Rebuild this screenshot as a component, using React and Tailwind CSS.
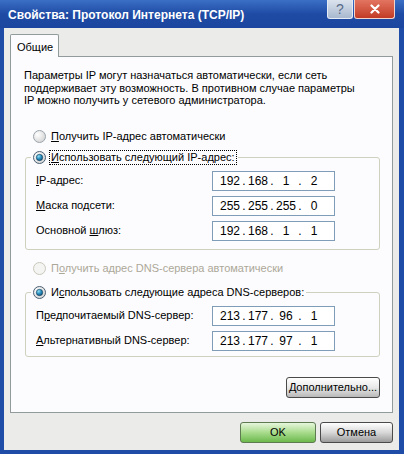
import React from "react";

const font = { fontFamily: '"Liberation Sans", Arial, sans-serif' };

const Radio = ({ checked, disabled }) => (
  <svg width="13" height="13" viewBox="0 0 13 13" className="shrink-0">
    <defs>
      <radialGradient id="rbg" cx="0.35" cy="0.35" r="0.8">
        <stop offset="0" stopColor="#ffffff" />
        <stop offset="1" stopColor="#cfcfcf" />
      </radialGradient>
      <radialGradient id="rdot" cx="0.35" cy="0.3" r="0.8">
        <stop offset="0" stopColor="#8fe0f5" />
        <stop offset="0.5" stopColor="#2a8fc0" />
        <stop offset="1" stopColor="#0b4a70" />
      </radialGradient>
    </defs>
    <circle
      cx="6.5"
      cy="6.5"
      r="6"
      fill={disabled ? "#f4f4f2" : "url(#rbg)"}
      stroke={disabled ? "#c9c7ba" : checked ? "#4a5f74" : "#9aa4ad"}
    />
    {checked && <circle cx="6.5" cy="6.5" r="3.2" fill="url(#rdot)" stroke="#123a55" strokeWidth="0.6" />}
  </svg>
);

const IpField = ({ parts }) => (
  <div className="w-[123px] h-[20px] border border-[#7f9db9] bg-white flex items-center pl-[5px] text-[12px]">
    {parts.map((p, i) => (
      <React.Fragment key={i}>
        {i > 0 && <span className="w-[4px] text-center">.</span>}
        <span className="w-[24px] text-center">{p}</span>
      </React.Fragment>
    ))}
  </div>
);

const Row = ({ label, parts }) => (
  <div className="flex items-center h-[20px]">
    <span className="w-[176px]">{label}</span>
    <IpField parts={parts} />
  </div>
);

const XpButton = ({ children, className = "" }) => (
  <button
    className={`h-[21px] rounded-[3px] border border-[#4a4a4a] flex items-center justify-center text-[11px] ${className}`}
  >
    {children}
  </button>
);

export default function App() {
  return (
    <div className="w-[404px] h-[454px] bg-[#1f4ca6] flex flex-col text-[11px] text-black" style={font}>
      {/* title bar */}
      <div className="h-[28px] flex justify-between bg-gradient-to-b from-[#3b6fc6] via-[#1f4ba5] to-[#1b46a0]">
        <span className="pl-[8px] pt-[8px] text-white font-bold text-[12px] leading-[14px]">
          Свойства: Протокол Интернета (TCP/IP)
        </span>
        <div className="flex gap-[1px] pr-[9px] h-[19px]">
          <div className="w-[26px] h-[19px] rounded-b-[3px] border border-t-0 border-[#e6ecf6] bg-gradient-to-b from-[#dbe3ee] to-[#a9b8cf] flex items-center justify-center text-[#5a6b88] text-[14px] leading-none">
            ?
          </div>
          <div className="w-[41px] h-[19px] rounded-b-[3px] border border-t-0 border-[#f2d4cc] bg-gradient-to-b from-[#e27460] to-[#c23a24] flex items-center justify-center">
            <svg width="10" height="10" viewBox="0 0 10 10">
              <path d="M1.5 1.5 L8.5 8.5 M8.5 1.5 L1.5 8.5" stroke="#ffffff" strokeWidth="2.2" strokeLinecap="round" />
            </svg>
          </div>
        </div>
      </div>

      {/* body */}
      <div className="flex-1 ml-[4px] mr-[5px] mb-[4px] bg-[#ebebea] flex flex-col px-[6px]">
        <div className="flex mt-[6px]">
          <div className="h-[23px] w-[49px] bg-[#fcfcfe] border border-b-0 border-[#919b9c] rounded-t-[2px] pl-[6px] pt-[4px] -mb-[1px] z-10">
            Общие
          </div>
        </div>
        <div className="h-[357px] border border-[#919b9c] bg-[#fcfcfe] flex flex-col pl-[13px] pr-[12px]">
          <p className="pt-[12px] leading-[12.5px]">
            Параметры IP могут назначаться автоматически, если сеть
            <br />
            поддерживает эту возможность. В противном случае параметры
            <br />
            IP можно получить у сетевого администратора.
          </p>

          <div className="flex items-center gap-[5px] h-[16px] mt-[22px] ml-[9px]">
            <Radio />
            <span>
              <u>П</u>олучить IP-адрес автоматически
            </span>
          </div>

          <fieldset className="mt-[5px] ml-[1px] w-[355px] border border-[#d0d0bf] rounded-[3px] px-[10px] pb-[8px]">
            <legend className="-ml-[5px] px-[2px] h-[16px]">
              <span className="flex items-center gap-[4px] h-[16px]">
                <Radio checked />
                <span className="outline-1 outline-dotted outline-black px-[1px] leading-[13px]">
                  <u>И</u>спользовать следующий IP-адрес:
                </span>
              </span>
            </legend>
            <div className="flex flex-col gap-[5px] pt-[5px]">
              <Row label={<><u>I</u>P-адрес:</>} parts={["192", "168", "1", "2"]} />
              <Row label={<><u>М</u>аска подсети:</>} parts={["255", "255", "255", "0"]} />
              <Row label={<>Основной <u>ш</u>люз:</>} parts={["192", "168", "1", "1"]} />
            </div>
          </fieldset>

          <div className="flex items-center gap-[5px] h-[16px] mt-[11px] ml-[9px] text-[#aca899]">
            <Radio disabled />
            <span>
              П<u>о</u>лучить адрес DNS-сервера автоматически
            </span>
          </div>

          <fieldset className="mt-[8px] ml-[1px] w-[355px] border border-[#d0d0bf] rounded-[3px] px-[10px] pb-[5px]">
            <legend className="-ml-[5px] px-[2px] h-[16px]">
              <span className="flex items-center gap-[5px] h-[16px]">
                <Radio checked />
                <span>
                  И<u>с</u>пользовать следующие адреса DNS-серверов:
                </span>
              </span>
            </legend>
            <div className="flex flex-col gap-[5px] pt-[5px]">
              <Row label={<>П<u>р</u>едпочитаемый DNS-сервер:</>} parts={["213", "177", "96", "1"]} />
              <Row label={<><u>А</u>льтернативный DNS-сервер:</>} parts={["213", "177", "97", "1"]} />
            </div>
          </fieldset>

          <div className="flex justify-end mt-[20px]">
            <XpButton className="w-[94px] bg-gradient-to-b from-[#ffffff] via-[#e8e8e8] to-[#b8b8b8]">
              <u>Д</u>ополнительно...
            </XpButton>
          </div>
        </div>

        <div className="flex justify-end gap-[4px] mt-[9px]">
          <XpButton className="w-[76px] border-[#5d7a50] bg-gradient-to-b from-[#e6f6dc] via-[#a8dc8c] to-[#6cb94c]">
            OK
          </XpButton>
          <XpButton className="w-[73px] bg-gradient-to-b from-[#ffffff] via-[#d8d8d8] to-[#9c9c9c]">
            Отмена
          </XpButton>
        </div>
      </div>
    </div>
  );
}
